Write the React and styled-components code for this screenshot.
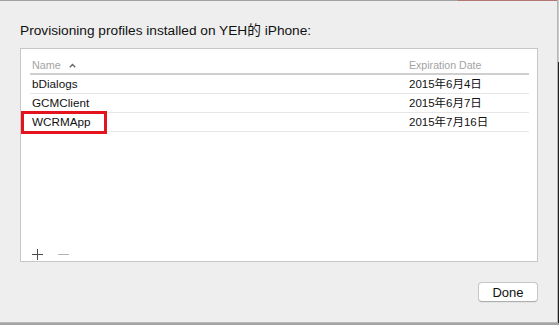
import React from "react";
import styled, { createGlobalStyle } from "styled-components";

const Global = createGlobalStyle`
  html, body { margin: 0; padding: 0; background: #a6a6a6; }
  body { font-family: "Liberation Sans", "Noto Sans CJK SC", Arial, sans-serif; }
`;

const Screen = styled.div`
  width: 559px;
  height: 325px;
  display: flex;
  flex-direction: column;
  background: #a4a4a4;
  overflow: hidden;
`;

const Upper = styled.div`
  display: flex;
  height: 323px;
`;

const Gutter = styled.div`
  width: 1px;
  background: linear-gradient(#c9c9c9 0 62px, #202020 62px);
`;

const Sheet = styled.div`
  width: 558px;
  box-sizing: border-box;
  height: 323px;
  display: flex;
  flex-direction: column;
  background: #eeeeee;
  border-right: 1px solid #b4b4b4;
  border-bottom: 1px solid #b8b8b8;
`;

const TopEdge = styled.div`
  display: flex;
  height: 1px;
  flex-shrink: 0;
`;

const EdgePart = styled.div`
  height: 1px;
  background: ${(p) => p.$c};
  flex: ${(p) => (p.$w ? `0 0 ${p.$w}px` : "1")};
`;

const Content = styled.div`
  flex: 1;
  display: flex;
  flex-direction: column;
  padding: 22px 19px 0 20px;
`;

const Title = styled.div`
  font-size: 13.7px;
  line-height: 16px;
  color: #111;
  margin-bottom: 9px;
  white-space: nowrap;
`;

const Table = styled.div`
  height: 214px;
  box-sizing: border-box;
  background: #fff;
  border: 1px solid #c7c7c7;
  display: flex;
  flex-direction: column;
  padding: 8px 8px 0 9px;
`;

const Grid = styled.div`
  display: grid;
  grid-template-columns: 377px 1fr;
  height: ${(p) => p.$h}px;
  box-sizing: border-box;
  align-items: center;
  border-bottom: ${(p) => p.$b}px solid ${(p) => p.$bc};
  position: relative;
`;

const Cell = styled.div`
  padding-left: 2px;
  font-size: ${(p) => p.$fs}px;
  line-height: 14px;
  color: ${(p) => p.$c};
  white-space: nowrap;
  display: flex;
  align-items: center;
  gap: 8px;
`;

const Highlight = styled.div`
  position: absolute;
  left: -9px;
  top: -2px;
  width: 86px;
  height: 23px;
  box-sizing: border-box;
  border: 3px solid #e3141d;
`;

const ListFooter = styled.div`
  margin-top: auto;
  height: 14px;
  display: flex;
  align-items: center;
  gap: 15px;
  padding-left: 2px;
`;

const Footer = styled.div`
  display: flex;
  justify-content: flex-end;
  margin-top: 20px;
`;

const Button = styled.button`
  width: 60px;
  height: 20px;
  box-sizing: border-box;
  padding: 0;
  background: #ffffff;
  border: 1px solid #c6c6c6;
  border-bottom-color: #aeaeae;
  border-radius: 4px;
  font-family: "Liberation Sans", Arial, sans-serif;
  font-size: 13px;
  color: #111;
  box-shadow: 0 0.5px 0 rgba(0,0,0,0.08);
`;

const rows = [
  { name: "bDialogs", date: "2015年6月4日" },
  { name: "GCMClient", date: "2015年6月7日" },
  { name: "WCRMApp", date: "2015年7月16日", marked: true },
];

const Plus = () => (
  <svg width="11" height="11" viewBox="0 0 11 11">
    <path d="M5.5 0v11M0 5.5h11" stroke="#4d4d4d" strokeWidth="1" />
  </svg>
);

const Minus = () => (
  <svg width="11" height="11" viewBox="0 0 11 11">
    <path d="M0 5.5h11" stroke="#b3b3b3" strokeWidth="1" />
  </svg>
);

const Caret = () => (
  <svg width="7" height="5" viewBox="0 0 7 5">
    <path d="M0.8 4.2L3.5 1.5L6.2 4.2" fill="none" stroke="#666" strokeWidth="1.4" />
  </svg>
);

export default function App() {
  return (
    <>
      <Global />
      <Screen>
        <Upper>
          <Sheet>
            <TopEdge>
              <EdgePart $c="#a2a2a2" $w={458} />
              <EdgePart $c="#b27773" />
            </TopEdge>
            <Content>
              <Title>Provisioning profiles installed on YEH的 iPhone:</Title>
              <Table>
                <Grid $h={18} $b={2} $bc="#cfcfcf">
                  <Cell $fs={10.8} $c="#a3a3a3">
                    Name <Caret />
                  </Cell>
                  <Cell $fs={10.6} $c="#a3a3a3">Expiration Date</Cell>
                </Grid>
                {rows.map((r) => (
                  <Grid key={r.name} $h={19} $b={1} $bc="#e6e6e6">
                    {r.marked && <Highlight />}
                    <Cell $fs={11.7} $c="#111">{r.name}</Cell>
                    <Cell $fs={11.5} $c="#111">{r.date}</Cell>
                  </Grid>
                ))}
                <ListFooter>
                  <Plus />
                  <Minus />
                </ListFooter>
              </Table>
              <Footer>
                <Button>Done</Button>
              </Footer>
            </Content>
          </Sheet>
          <Gutter />
        </Upper>
      </Screen>
    </>
  );
}
